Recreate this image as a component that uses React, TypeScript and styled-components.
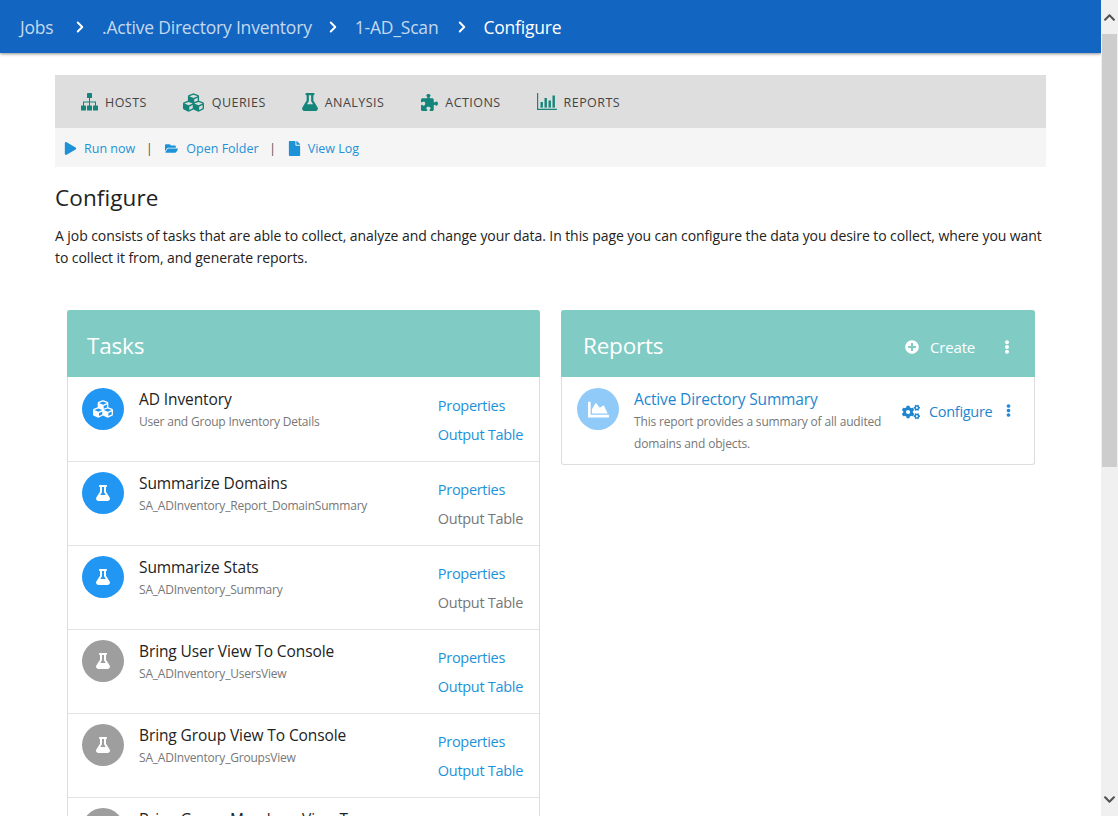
import React from 'react';
import styled, { createGlobalStyle } from 'styled-components';
import {
  FaChartArea,
  FaChevronDown,
  FaChevronUp,
  FaCogs,
  FaCubes,
  FaEllipsisV,
  FaFile,
  FaFlask,
  FaFolderOpen,
  FaPlay,
  FaPlusCircle,
} from 'react-icons/fa';
import { FaPuzzlePiece } from 'react-icons/fa6';
import { LuChevronRight } from 'react-icons/lu';

const crumbs = [
  { label: 'Jobs', extra: 5.5 },
  { label: '.Active Directory Inventory', extra: 0 },
  { label: '1-AD_Scan', extra: 2 },
];

const SitemapIcon = () => (
  <svg width="17" height="18" viewBox="0 0 17 18" fill="currentColor">
    <rect x="6" y="0" width="5" height="5" rx="0.6" />
    <path d="M8 5h1v3.5h6V13h-1V9.5H9V13H8V9.5H3V13H2V8.5h6z" />
    <rect x="0" y="12.5" width="5" height="5" rx="0.6" />
    <rect x="6" y="12.5" width="5" height="5" rx="0.6" />
    <rect x="12" y="12.5" width="5" height="5" rx="0.6" />
  </svg>
);

const BarsIcon = () => (
  <svg width="20" height="18" viewBox="0 0 20 18" fill="currentColor">
    <path d="M0 0h1.2v15.8H20V17H0z" />
    <rect x="3.5" y="9" width="2.4" height="5.6" />
    <rect x="7.5" y="5" width="2.4" height="9.6" />
    <rect x="11.5" y="7.5" width="2.4" height="7.1" />
    <rect x="15.5" y="2.5" width="2.4" height="12.1" />
  </svg>
);

const tabs = [
  { label: 'HOSTS', width: 17, icon: <SitemapIcon /> },
  { label: 'QUERIES', width: 22, icon: <FaCubes size={21} /> },
  { label: 'ANALYSIS', width: 16, icon: <FaFlask size={18} /> },
  { label: 'ACTIONS', width: 18, icon: <FaPuzzlePiece size={17} /> },
  { label: 'REPORTS', width: 20, icon: <BarsIcon /> },
];

const tasks = [
  { name: 'AD Inventory', sub: 'User and Group Inventory Details', tone: 'blue', cubes: true, output: true },
  { name: 'Summarize Domains', sub: 'SA_ADInventory_Report_DomainSummary', tone: 'blue', output: false },
  { name: 'Summarize Stats', sub: 'SA_ADInventory_Summary', tone: 'blue', output: false },
  { name: 'Bring User View To Console', sub: 'SA_ADInventory_UsersView', tone: 'grey', output: true },
  { name: 'Bring Group View To Console', sub: 'SA_ADInventory_GroupsView', tone: 'grey', output: true },
  { name: 'Bring Group Members View To Console', sub: 'SA_ADInventory_GroupMembersView', tone: 'grey', output: true },
];

function App() {
  return (
    <Page>
      <GlobalStyle />
      <Main>
        <TopBar>
          {crumbs.map((crumb) => (
            <React.Fragment key={crumb.label}>
              <Crumb>{crumb.label}</Crumb>
              <CrumbArrow $extra={crumb.extra}>
                <LuChevronRight strokeWidth={2.6} />
              </CrumbArrow>
            </React.Fragment>
          ))}
          <Crumb $current>Configure</Crumb>
        </TopBar>
        <Content>
          <TabBar>
            {tabs.map((tab) => (
              <Tab key={tab.label}>
                <TabIcon $width={tab.width}>{tab.icon}</TabIcon>
                {tab.label}
              </Tab>
            ))}
          </TabBar>
          <ActionBar>
            <ActionLink>
              <FaPlay size={13} />
              Run now
            </ActionLink>
            <Divider>|</Divider>
            <ActionLink $gap={8}>
              <FaFolderOpen size={13} />
              Open Folder
            </ActionLink>
            <Divider $after={10.5}>|</Divider>
            <ActionLink $gap={6}>
              <FaFile size={15} />
              View Log
            </ActionLink>
          </ActionBar>
          <Title>Configure</Title>
          <Intro>
            A job consists of tasks that are able to collect, analyze and change your data. In this page you can
            configure the data you desire to collect, where you want to collect it from, and generate reports.
          </Intro>
          <Columns>
            <Card>
              <CardHeader>
                <CardTitle>Tasks</CardTitle>
              </CardHeader>
              {tasks.map((task) => (
                <TaskRow key={task.name}>
                  <Badge $tone={task.tone}>{task.cubes ? <FaCubes size={20} /> : <FaFlask size={16} />}</Badge>
                  <TaskText>
                    <TaskName>{task.name}</TaskName>
                    <TaskSub>{task.sub}</TaskSub>
                  </TaskText>
                  <TaskLinks>
                    <TaskLink>Properties</TaskLink>
                    <TaskLink $muted={!task.output}>Output Table</TaskLink>
                  </TaskLinks>
                </TaskRow>
              ))}
            </Card>
            <Card>
              <CardHeader $inset={22}>
                <CardTitle>Reports</CardTitle>
                <CreateButton>
                  <FaPlusCircle size={14} />
                  Create
                </CreateButton>
                <HeaderMenu>
                  <FaEllipsisV size={14} />
                </HeaderMenu>
              </CardHeader>
              <ReportRow>
                <Badge $tone="light">
                  <FaChartArea size={21} />
                </Badge>
                <ReportText>
                  <ReportName>Active Directory Summary</ReportName>
                  <ReportDesc>This report provides a summary of all audited domains and objects.</ReportDesc>
                </ReportText>
                <ConfigureLink>
                  <FaCogs size={18} />
                  Configure
                </ConfigureLink>
                <RowMenu>
                  <FaEllipsisV size={13} />
                </RowMenu>
              </ReportRow>
            </Card>
          </Columns>
        </Content>
      </Main>
      <ScrollBar>
        <ScrollArrow>
          <FaChevronUp size={13} />
        </ScrollArrow>
        <ScrollTrack>
          <ScrollThumb />
        </ScrollTrack>
        <ScrollArrow>
          <FaChevronDown size={13} />
        </ScrollArrow>
      </ScrollBar>
    </Page>
  );
}

const GlobalStyle = createGlobalStyle`
  html, body {
    margin: 0;
    height: 100%;
    overflow: hidden;
    background: #fff;
  }
  body {
    font-family: "Open Sans", "Noto Sans", sans-serif;
    color: #222;
  }
`;

const Page = styled.div`
  display: flex;
  height: 816px;
  overflow: hidden;
`;

const Main = styled.div`
  flex: 1;
  min-width: 0;
  overflow: hidden;
`;

const TopBar = styled.header`
  display: flex;
  align-items: center;
  height: 53px;
  padding-left: 20px;
  background: #1265c0;
  box-shadow: 0 1px 3px rgba(0, 0, 0, 0.45);
`;

const Crumb = styled.span<{ $current?: boolean }>`
  font-size: 17.5px;
  letter-spacing: -0.2px;
  color: ${(p) => (p.$current ? '#fff' : '#c4d9f0')};
`;

const CrumbArrow = styled.span<{ $extra: number }>`
  display: flex;
  margin: 0 12.5px 0 ${(p) => 12.5 + p.$extra}px;
  color: #fff;
  font-size: 18px;
`;

const Content = styled.div`
  padding: 22px 55px 0;
`;

const TabBar = styled.nav`
  display: flex;
  align-items: center;
  gap: 36px;
  height: 53px;
  padding: 1px 0 0 26px;
  box-sizing: border-box;
  background: #dedede;
`;

const Tab = styled.span`
  display: flex;
  align-items: center;
  gap: 7px;
  font-size: 12.5px;
  letter-spacing: 0.45px;
  color: #444;
`;

const TabIcon = styled.span<{ $width: number }>`
  display: flex;
  justify-content: center;
  width: ${(p) => p.$width}px;
  color: #14857a;

  svg {
    flex: none;
  }
`;

const ActionBar = styled.div`
  display: flex;
  align-items: center;
  height: 39px;
  padding: 1px 0 0 9px;
  box-sizing: border-box;
  background: #f5f5f5;
`;

const ActionLink = styled.span<{ $gap?: number }>`
  display: flex;
  align-items: center;
  gap: ${(p) => p.$gap ?? 7}px;
  font-size: 12.5px;
  letter-spacing: 0;
  color: #1d92d8;

  svg {
    width: auto;
  }
`;

const Divider = styled.span<{ $after?: number }>`
  margin: 0 ${(p) => p.$after ?? 12.5}px 0 10.5px;
  font-size: 13px;
  color: #555;
`;

const Title = styled.h1`
  margin: 16px 0 0;
  font-size: 22.5px;
  line-height: 30px;
  font-weight: 400;
  letter-spacing: 0.1px;
  color: #222;
`;

const Intro = styled.p`
  margin: 12px 0 0;
  font-size: 14px;
  line-height: 22px;
  letter-spacing: -0.08px;
  color: #222;
`;

const Columns = styled.div`
  display: grid;
  grid-template-columns: 473px 474px;
  gap: 21px;
  align-items: start;
  margin: 41px 0 0 12px;
`;

const Card = styled.section`
  border: 1px solid #ddd;
  border-top: 0;
  border-radius: 3px;
  background: #fff;
`;

const CardHeader = styled.div<{ $inset?: number }>`
  display: flex;
  align-items: center;
  height: 67px;
  padding: 0 23px 0 ${(p) => p.$inset ?? 20}px;
  margin: 0 -1px 1px;
  border-radius: 3px 3px 0 0;
  background: #80cbc4;
  color: #fff;
`;

const CardTitle = styled.h2`
  flex: 1;
  margin: 4px 0 0;
  font-size: 22.5px;
  font-weight: 400;
  letter-spacing: -0.2px;
`;

const CreateButton = styled.span`
  display: flex;
  align-items: center;
  gap: 11px;
  margin: 7px 27px 0 0;
  font-size: 15px;
  letter-spacing: -0.2px;
`;

const HeaderMenu = styled.span`
  display: flex;
  margin: 6px 0 0 0;
  width: 10px;
`;

const TaskRow = styled.div`
  display: flex;
  align-items: flex-start;
  height: 84px;
  box-sizing: border-box;
  padding: 10px 16px 0 14px;
  border-bottom: 1px solid #e3e3e3;
`;

const Badge = styled.span<{ $tone: string }>`
  display: flex;
  flex: none;
  align-items: center;
  justify-content: center;
  width: 42px;
  height: 42px;
  border-radius: 50%;
  color: #fff;
  background: ${(p) => (p.$tone === 'blue' ? '#2196f3' : p.$tone === 'light' ? '#90caf9' : '#9e9e9e')};
`;

const TaskText = styled.div`
  flex: 1;
  min-width: 0;
  margin-left: 15px;
`;

const TaskName = styled.div`
  max-width: 260px;
  font-size: 15.5px;
  line-height: 22px;
  letter-spacing: -0.1px;
  color: #222;
`;

const TaskSub = styled.div`
  margin-top: 1px;
  font-size: 12px;
  line-height: 22px;
  letter-spacing: -0.2px;
  color: #777;
  white-space: nowrap;
`;

const TaskLinks = styled.div`
  display: flex;
  flex-direction: column;
  gap: 7px;
  margin-top: 7px;
`;

const TaskLink = styled.span<{ $muted?: boolean }>`
  font-size: 14.5px;
  line-height: 22px;
  letter-spacing: -0.3px;
  color: ${(p) => (p.$muted ? '#777' : '#1d92d8')};
  white-space: nowrap;
`;

const ReportRow = styled.div`
  display: flex;
  align-items: flex-start;
  height: 86px;
  box-sizing: border-box;
  padding: 10px 18px 0 15px;
`;

const ReportText = styled.div`
  width: 258px;
  flex: none;
  margin-left: 15px;
`;

const ReportName = styled.div`
  font-size: 15.5px;
  line-height: 22px;
  letter-spacing: -0.15px;
  color: #1d86cf;
  white-space: nowrap;
`;

const ReportDesc = styled.div`
  margin-top: 1px;
  font-size: 12px;
  line-height: 22px;
  letter-spacing: -0.16px;
  color: #777;
`;

const ConfigureLink = styled.span`
  display: flex;
  align-items: center;
  gap: 9px;
  margin: 13px 0 0 10px;
  font-size: 14.5px;
  line-height: 22px;
  letter-spacing: -0.3px;
  color: #1d86cf;
`;

const RowMenu = styled.span`
  display: flex;
  margin: 16px 0 0 10px;
  color: #1e88e5;
`;

const ScrollBar = styled.aside`
  display: flex;
  flex: none;
  flex-direction: column;
  width: 17px;
  background: #f0f0f0;
`;

const ScrollArrow = styled.span`
  display: flex;
  flex: none;
  align-items: center;
  justify-content: center;
  height: 34px;
  color: #505050;
`;

const ScrollTrack = styled.div`
  flex: 1;
  padding: 0 1px;
`;

const ScrollThumb = styled.div`
  height: 433px;
  background: #cdcdcd;
`;

export default App;
